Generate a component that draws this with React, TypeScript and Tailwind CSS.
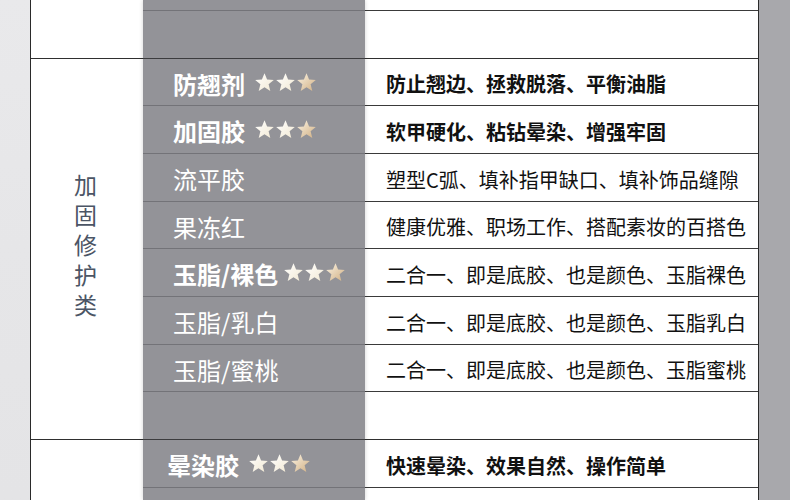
import type { FC } from 'react';

type Row = {
  h: number;
  name?: string;
  bold?: boolean;
  stars?: boolean;
  desc?: string;
  descBold?: boolean;
  divider?: boolean;
  pl?: string;
};

const rows: Row[] = [
  { h: 11 },
  { h: 48, divider: true },
  { h: 47, name: '防翘剂', bold: true, stars: true, desc: '防止翘边、拯救脱落、平衡油脂', descBold: true },
  { h: 48, name: '加固胶', bold: true, stars: true, desc: '软甲硬化、粘钻晕染、增强牢固', descBold: true },
  { h: 48, name: '流平胶', desc: '塑型C弧、填补指甲缺口、填补饰品缝隙' },
  { h: 47, name: '果冻红', desc: '健康优雅、职场工作、搭配素妆的百搭色' },
  { h: 48, name: '玉脂/裸色', bold: true, stars: true, desc: '二合一、即是底胶、也是颜色、玉脂裸色', pl: 'pl-[30px] gap-[6px]' },
  { h: 48, name: '玉脂/乳白', desc: '二合一、即是底胶、也是颜色、玉脂乳白' },
  { h: 47, name: '玉脂/蜜桃', desc: '二合一、即是底胶、也是颜色、玉脂蜜桃' },
  { h: 48, divider: true },
  { h: 48, name: '晕染胶', bold: true, stars: true, desc: '快速晕染、效果自然、操作简单', descBold: true, pl: 'pl-[24px] gap-[10px]' },
  { h: 48, name: '渐变胶', bold: true, stars: true, desc: '渐变过渡、色彩柔和、持久显色', descBold: true, pl: 'pl-[24px] gap-[10px]' },
];

// fat five-point star, 19x19 box
const starPts =
  '9.5,0.3 12.1,6.5 18.8,6.9 13.6,11.2 15.3,17.9 9.5,14.2 3.7,17.9 5.4,11.2 0.2,6.9 6.9,6.5';

const Stars: FC = () => (
  <svg width="61" height="19" viewBox="0 0 61 19" className="shrink-0 -mt-[3px]">
    <defs>
      <linearGradient id="cream" x1="0" y1="0" x2="1" y2="1">
        <stop offset="0" stopColor="#ffffff" />
        <stop offset="1" stopColor="#f2e9d3" />
      </linearGradient>
      <linearGradient id="gold" x1="0" y1="0" x2="1" y2="1">
        <stop offset="0" stopColor="#fbf3e3" />
        <stop offset="1" stopColor="#d1b084" />
      </linearGradient>
    </defs>
    <polygon points={starPts} fill="url(#cream)" />
    <polygon points={starPts} fill="url(#cream)" transform="translate(21 0)" />
    <polygon points={starPts} fill="url(#gold)" transform="translate(42 0)" />
  </svg>
);

const App: FC = () => {
  return (
    <div className="flex w-[790px] h-[500px] overflow-hidden font-['Noto_Sans_CJK_SC',sans-serif]">
      <div className="w-[30px] shrink-0 bg-gradient-to-b from-[#e9e9eb] via-[#e6e6e8] to-[#e4e4e6]" />

      <div className="flex shrink-0 bg-white border-x border-[#2a2a2a]">
        {/* category */}
        <div className="w-[112px] flex flex-col">
          <div className="h-[59px] shrink-0 border-b border-[#2f2f2f]" />
          <div className="h-[381px] shrink-0 border-b border-[#2f2f2f] flex items-center justify-center pr-[4px]">
            <span className="[writing-mode:vertical-rl] text-[23px] leading-none tracking-[7px] text-[#4b5565]">
              加固修护类
            </span>
          </div>
          <div className="flex-1" />
        </div>

        {/* product names */}
        <div className="w-[222px] flex flex-col bg-[#939398] relative z-10 shadow-[0_0_4px_rgba(0,0,0,0.18)]">
          {rows.map((r, i) => (
            <div
              key={i}
              style={{ height: r.h }}
              className={`shrink-0 flex items-center pt-[3px] ${r.pl ?? 'pl-[30px] gap-[10px]'} border-b ${
                r.divider ? 'border-[#3c3c3e]' : 'border-[#737378]'
              }`}
            >
              {r.name && (
                <span className={`text-[24px] text-white leading-none ${r.bold ? 'font-bold' : 'font-normal'}`}>
                  {r.name}
                </span>
              )}
              {r.stars && <Stars />}
            </div>
          ))}
        </div>

        {/* descriptions */}
        <div className="w-[393px] flex flex-col">
          {rows.map((r, i) => (
            <div
              key={i}
              style={{ height: r.h }}
              className={`shrink-0 flex items-center pl-[21px] pt-[4px] border-b ${
                r.divider ? 'border-[#2f2f2f]' : 'border-[#3a3a3a]'
              }`}
            >
              {r.desc && (
                <span className={`text-[20px] leading-none text-[#111] ${r.descBold ? 'font-bold' : 'font-normal'}`}>
                  {r.desc}
                </span>
              )}
            </div>
          ))}
        </div>
      </div>

      <div className="flex-1 bg-[#a8a8ac]" />
    </div>
  );
};

export default App;
